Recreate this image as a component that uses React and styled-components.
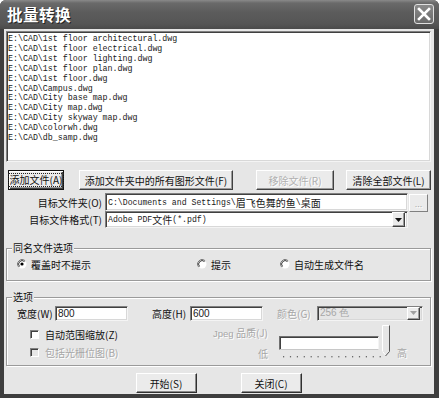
import React from 'react';
import styled, { createGlobalStyle } from 'styled-components';

const Global = createGlobalStyle`
  html, body { margin: 0; padding: 0; background: #fff; }
  body { font-family: "Noto Sans CJK SC", sans-serif; }
  * { box-sizing: border-box; }
`;

const BG = '#e6e6e6';

const Window = styled.div`
  width: 439px;
  height: 398px;
  background: #3e3e3e;
  border-radius: 6px 6px 0 0;
  display: flex;
  flex-direction: column;
  overflow: hidden;
`;

const TitleBar = styled.div`
  height: 29px;
  flex: none;
  display: flex;
  align-items: center;
  justify-content: space-between;
  padding: 0 5px 0 7px;
  background: linear-gradient(#8a8a8a 0px, #6a6a6a 3px, #5c5c5c 12px, #555 24px, #4a4a4a 29px);
`;

const Title = styled.div`
  color: #fff;
  font-family: "Noto Sans CJK SC", sans-serif;
  font-weight: 700;
  font-size: 15.5px;
  letter-spacing: 0.5px;
  text-shadow: 1px 1px 0 #222;
  margin-top: -2px;
`;

const CloseBtn = styled.div`
  width: 20px;
  height: 20px;
  border: 1px solid #e0e0e0;
  border-radius: 3px;
  background: linear-gradient(#8a8a8a, #6a6a6a);
  display: flex;
  align-items: center;
  justify-content: center;
  margin-top: -1px;
`;

const Body = styled.div`
  flex: 1;
  margin: 0 5px 4px 4px;
  background: ${BG};
  display: flex;
  flex-direction: column;
  padding: 2px 3px 0 2px;
  font-family: "Noto Sans CJK SC", sans-serif;
  font-size: 10px;
  color: #111;
`;

const ListBox = styled.div`
  height: 131px;
  flex: none;
  background: #fff;
  border: 1px solid;
  border-color: #808080 #f4f4f4 #f4f4f4 #808080;
  box-shadow: inset 1px 1px 0 #404040, inset -1px -1px 0 #d8d8d8;
  padding: 2px 1px;
  font-family: "Liberation Mono", monospace;
  font-size: 8.3px;
  line-height: 9.9px;
  color: #1a1a1a;
  white-space: pre;
`;

const ButtonRow = styled.div`
  display: flex;
  height: 20px;
  margin-top: 8px;
  flex: none;
`;

const Btn = styled.div`
  width: ${p => p.$w}px;
  height: ${p => p.$h || 20}px;
  margin-left: ${p => p.$ml || 0}px;
  flex: none;
  background: #ebebeb;
  border: 1px solid;
  border-color: ${p => (p.$default ? '#111' : '#fff #404040 #404040 #fff')};
  box-shadow: ${p =>
    p.$default
      ? 'inset 1px 1px 0 #fff, inset -1px -1px 0 #404040, inset -2px -2px 0 #9a9a9a'
      : 'inset -1px -1px 0 #9a9a9a'};
  display: flex;
  align-items: center;
  justify-content: center;
  font-size: 10px;
  color: ${p => (p.$disabled ? '#b0b0b0' : '#111')};
  text-shadow: ${p => (p.$disabled ? '1px 1px 0 #fff' : 'none')};
  white-space: nowrap;
`;

const Focus = styled.span`
  outline: 1px dotted #222;
  outline-offset: 0px;
  padding: 0 1px;
  line-height: 12px;
`;

const FieldRow = styled.div`
  display: grid;
  grid-template-columns: 99px 303px 20px;
  align-items: center;
  height: ${p => p.$h}px;
  margin-top: ${p => p.$mt}px;
  flex: none;
`;

const FieldLabel = styled.div`
  text-align: right;
  padding-right: 3px;
  white-space: nowrap;
`;

const Sunken = styled.div`
  height: ${p => p.$h}px;
  width: ${p => (p.$w ? `${p.$w}px` : 'auto')};
  margin-left: ${p => p.$ml || 0}px;
  background: ${p => (p.$disabled ? BG : '#fff')};
  border: 1px solid;
  border-color: #808080 #f4f4f4 #f4f4f4 #808080;
  box-shadow: inset 1px 1px 0 #404040, inset -1px -1px 0 #d8d8d8;
  display: flex;
  align-items: center;
  padding-left: 2px;
  padding-right: ${p => p.$pr || 0}px;
  white-space: nowrap;
  overflow: hidden;
  flex: none;
`;

const Mono = styled.span`
  font-family: "Liberation Mono", monospace;
  font-size: 8.2px;
  color: #1a1a1a;
`;

const Cjk = styled.span`
  font-family: "Noto Sans CJK SC", sans-serif;
  font-size: 10px;
  color: #1a1a1a;
`;

const ValueText = styled.span`
  font-family: "Liberation Sans", sans-serif;
  font-size: 10px;
  color: ${p => (p.$disabled ? '#a6a6a6' : '#1a1a1a')};
`;

const DropBtn = styled.div`
  margin-left: auto;
  width: 13px;
  height: 100%;
  background: #ebebeb;
  border: 1px solid;
  border-color: #fff #404040 #404040 #fff;
  box-shadow: inset -1px -1px 0 #9a9a9a;
  display: flex;
  align-items: center;
  justify-content: center;
`;

const BrowseBtn = styled.div`
  margin-left: 1px;
  height: 18px;
  margin-top: 2px;
  background: #ebebeb;
  border: 1px solid;
  border-color: #fff #808080 #808080 #fff;
  display: flex;
  align-items: flex-end;
  justify-content: center;
  padding-bottom: 3px;
  color: #a6a6a6;
  font-family: "Liberation Sans", sans-serif;
  font-size: 9px;
  line-height: 8px;
  text-shadow: 1px 1px 0 #fff;
`;

const Group = styled.div`
  position: relative;
  flex: none;
  height: ${p => p.$h}px;
  margin-top: ${p => p.$mt}px;
  border: 1px solid #9a9a9a;
  box-shadow: inset 1px 1px 0 #fff, 1px 1px 0 #fff;
  padding: ${p => p.$pad};
`;

const Legend = styled.div`
  position: absolute;
  top: -8px;
  left: 5px;
  background: ${BG};
  padding: 0 1px;
  line-height: 14px;
  font-size: 10px;
`;

const RadioRow = styled.div`
  display: flex;
  align-items: center;
  height: 14px;
`;

const Radio = styled.label`
  display: flex;
  align-items: center;
  gap: 4px;
  width: ${p => p.$w}px;
  flex: none;
  white-space: nowrap;
`;

const Row = styled.div`
  display: flex;
  align-items: center;
  height: ${p => p.$h}px;
  margin-top: ${p => p.$mt || 0}px;
`;

const InlineLabel = styled.div`
  width: ${p => p.$w}px;
  margin-left: ${p => p.$ml || 0}px;
  flex: none;
  white-space: nowrap;
  color: ${p => (p.$disabled ? '#a6a6a6' : '#111')};
  text-shadow: ${p => (p.$disabled ? '1px 1px 0 #fff' : 'none')};
`;

const OptionsBody = styled.div`
  display: flex;
  margin-top: 5px;
  height: 36px;
`;

const CheckCol = styled.div`
  width: 183px;
  padding-left: 13px;
  display: flex;
  flex-direction: column;
  flex: none;
`;

const CheckItem = styled.div`
  display: flex;
  align-items: center;
  gap: 6px;
  height: 18px;
  color: ${p => (p.$disabled ? '#a6a6a6' : '#111')};
  text-shadow: ${p => (p.$disabled ? '1px 1px 0 #fff' : 'none')};
  white-space: nowrap;
`;

const CheckBox = styled.span`
  width: 9px;
  height: 9px;
  flex: none;
  background: ${p => (p.$disabled ? BG : '#fff')};
  border-top: 1px solid #808080;
  border-left: 1px solid #808080;
  border-right: 1px solid #fff;
  border-bottom: 1px solid #fff;
  box-shadow: inset 1px 1px 0 #404040;
`;

const JpegLabels = styled.div`
  width: 70px;
  flex: none;
  display: flex;
  flex-direction: column;
  align-items: flex-end;
  gap: 7px;
  padding-top: 1px;
  padding-right: 2px;
  line-height: 13px;
  color: #a6a6a6;
  text-shadow: 1px 1px 0 #fff;
  white-space: nowrap;
`;

const JpegWord = styled.span`
  font-family: "Liberation Sans", sans-serif;
  font-size: 9.5px;
`;

const SliderArea = styled.div`
  position: relative;
  width: 118px;
  margin-left: 9px;
  flex: none;
`;

const Channel = styled.div`
  margin-top: 11px;
  width: 100px;
  height: 14px;
  background: #fff;
  border: 1px solid;
  border-color: #707070 #f4f4f4 #c8c8c8 #707070;
  box-shadow: inset 1px 1px 0 #404040;
`;

const Thumb = styled.svg`
  position: absolute;
  left: 103px;
  top: 0;
`;

const Ticks = styled.svg`
  position: absolute;
  left: 3px;
  top: 30px;
`;

const HighLabel = styled.div`
  padding-top: 21px;
  line-height: 13px;
  color: #a6a6a6;
  text-shadow: 1px 1px 0 #fff;
`;

const BottomRow = styled.div`
  display: flex;
  justify-content: center;
  gap: 44px;
  margin-top: 7px;
  flex: none;
`;

const BigBtn = styled.div`
  width: 61px;
  height: 20px;
  background: #ebebeb;
  border: 1px solid;
  border-color: #fff #303030 #303030 #fff;
  box-shadow: inset -1px -1px 0 #8a8a8a;
  display: flex;
  align-items: center;
  justify-content: center;
  font-size: 10px;
  color: #111;
`;

const files = [
  'E:\\CAD\\1st floor architectural.dwg',
  'E:\\CAD\\1st floor electrical.dwg',
  'E:\\CAD\\1st floor lighting.dwg',
  'E:\\CAD\\1st floor plan.dwg',
  'E:\\CAD\\1st floor.dwg',
  'E:\\CAD\\Campus.dwg',
  'E:\\CAD\\City base map.dwg',
  'E:\\CAD\\City map.dwg',
  'E:\\CAD\\City skyway map.dwg',
  'E:\\CAD\\colorwh.dwg',
  'E:\\CAD\\db_samp.dwg',
];

const RadioIcon = ({ checked }) => (
  <svg width="10" height="10" viewBox="0 0 10 10">
    <circle cx="5" cy="5" r="4.5" fill="#fff" />
    <path d="M8.18 1.82 A4.5 4.5 0 0 0 1.82 8.18" fill="none" stroke="#7a7a7a" strokeWidth="1" />
    <path d="M7.47 2.53 A3.5 3.5 0 0 0 2.53 7.47" fill="none" stroke="#333" strokeWidth="1" />
    {checked && <circle cx="5" cy="5" r="1.6" fill="#000" />}
  </svg>
);

const Arrow = ({ color = '#111' }) => (
  <svg width="7" height="4" viewBox="0 0 7 4">
    <path d="M0 0 H7 L3.5 4 Z" fill={color} />
  </svg>
);

export default function App() {
  const ticks = Array.from({ length: 15 }, (_, i) => 1 + i * 6.9);
  return (
    <>
      <Global />
      <Window>
        <TitleBar>
          <Title>批量转换</Title>
          <CloseBtn>
            <svg width="14" height="14" viewBox="0 0 14 14">
              <path d="M2 2 L12 12 M12 2 L2 12" stroke="#fff" strokeWidth="2.6" strokeLinecap="square" />
            </svg>
          </CloseBtn>
        </TitleBar>
        <Body>
          <ListBox>
            {files.map(f => (
              <div key={f}>{f}</div>
            ))}
          </ListBox>

          <ButtonRow>
            <Btn $w={56} $ml={2} $default>
              <Focus>添加文件(A)</Focus>
            </Btn>
            <Btn $w={154} $ml={15}>添加文件夹中的所有图形文件(F)</Btn>
            <Btn $w={78} $ml={23} $disabled>移除文件(R)</Btn>
            <Btn $w={85} $ml={12}>清除全部文件(L)</Btn>
          </ButtonRow>

          <FieldRow $h={18} $mt={2}>
            <FieldLabel>目标文件夹(O)</FieldLabel>
            <Sunken $h={18}>
              <Mono>C:\Documents and Settings\</Mono>
              <Cjk>眉飞色舞的鱼</Cjk>
              <Mono>\</Mono>
              <Cjk>桌面</Cjk>
            </Sunken>
            <BrowseBtn>...</BrowseBtn>
          </FieldRow>

          <FieldRow $h={17} $mt={1}>
            <FieldLabel>目标文件格式(T)</FieldLabel>
            <Sunken $h={17} $pr={2}>
              <Mono>Adobe PDF </Mono>
              <Cjk>文件</Cjk>
              <Mono>(*.pdf)</Mono>
              <DropBtn>
                <Arrow />
              </DropBtn>
            </Sunken>
            <span />
          </FieldRow>

          <Group $h={33} $mt={20} $pad="8px 0 0 10px">
            <Legend>同名文件选项</Legend>
            <RadioRow>
              <Radio $w={180}>
                <RadioIcon checked />
                覆盖时不提示
              </Radio>
              <Radio $w={83}>
                <RadioIcon />
                提示
              </Radio>
              <Radio $w={120}>
                <RadioIcon />
                自动生成文件名
              </Radio>
            </RadioRow>
          </Group>

          <Group $h={69} $mt={16} $pad="8px 0 0 10px">
            <Legend>选项</Legend>
            <Row $h={14}>
              <InlineLabel $w={38}>宽度(W)</InlineLabel>
              <Sunken $h={15} $w={73}>
                <ValueText>800</ValueText>
              </Sunken>
              <InlineLabel $w={38} $ml={24}>高度(H)</InlineLabel>
              <Sunken $h={15} $w={73}>
                <ValueText>600</ValueText>
              </Sunken>
              <InlineLabel $w={40} $ml={14} $disabled>颜色(G)</InlineLabel>
              <Sunken $h={15} $w={106} $pr={2} $disabled>
                <ValueText $disabled>256 色</ValueText>
                <DropBtn>
                  <Arrow color="#a0a0a0" />
                </DropBtn>
              </Sunken>
            </Row>
            <OptionsBody>
              <CheckCol>
                <CheckItem>
                  <CheckBox />
                  自动范围缩放(Z)
                </CheckItem>
                <CheckItem $disabled>
                  <CheckBox $disabled />
                  包括光栅位图(B)
                </CheckItem>
              </CheckCol>
              <JpegLabels>
                <span>
                  <JpegWord>Jpeg</JpegWord> 品质(J)
                </span>
                <span>低</span>
              </JpegLabels>
              <SliderArea>
                <Channel />
                <Thumb width="9" height="32" viewBox="0 0 9 32">
                  <path d="M0.5 26 V0.5 H7.5" fill="none" stroke="#fff" />
                  <path d="M7.5 0.5 V26.5 L3.5 31" fill="none" stroke="#555" />
                  <path d="M0.5 26.5 L3.5 30" fill="none" stroke="#fff" />
                </Thumb>
                <Ticks width="104" height="4" viewBox="0 0 104 4">
                  {ticks.map((x, i) => (
                    <rect key={i} x={x} y="1" width="1.2" height="1.4" fill="#6a6a6a" />
                  ))}
                </Ticks>
              </SliderArea>
              <HighLabel>高</HighLabel>
            </OptionsBody>
          </Group>

          <BottomRow>
            <BigBtn>开始(S)</BigBtn>
            <BigBtn>关闭(C)</BigBtn>
          </BottomRow>
        </Body>
      </Window>
    </>
  );
}
